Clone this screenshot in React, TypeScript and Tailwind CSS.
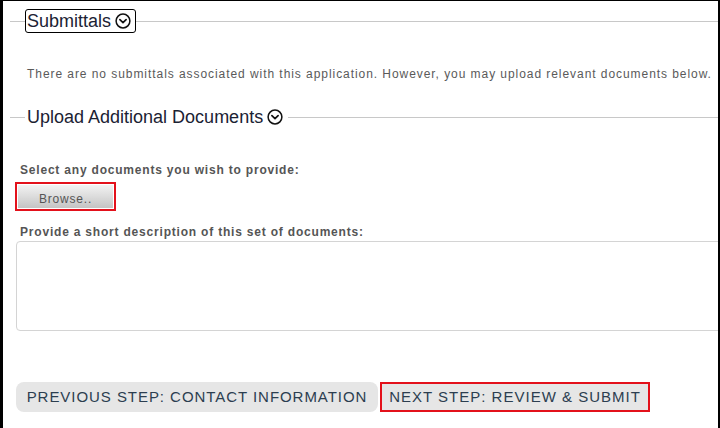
import React from "react";

function CircleChevron({ size = 15 }: { size?: number }) {
  return (
    <svg width={size} height={size} viewBox="0 0 16 16" fill="none">
      <circle cx="8" cy="8" r="6.9" stroke="#111" strokeWidth="1.5" />
      <path d="M4.9 6.6 L8 9.6 L11.1 6.6" stroke="#111" strokeWidth="1.7" strokeLinecap="round" strokeLinejoin="round" />
    </svg>
  );
}

export default function App() {
  return (
    <div
      className="w-[720px] h-[428px] overflow-hidden bg-white border-l-[3px] border-t border-r-2 border-black"
      style={{ fontFamily: '"Liberation Sans", Arial, sans-serif' }}
    >
      {/* Submittals legend */}
      <div className="mt-[8px] flex items-center h-[24px]">
        <div className="ml-[7px] w-[15px] h-px bg-[#c8c8c8]" />
        <div className="flex items-center h-[24px] w-[111px] border-[1.5px] border-black rounded-[3px] pl-[1px] gap-[4px]">
          <span className="text-[18px] leading-none text-[#1b2233]">Submittals</span>
          <CircleChevron size={16} />
        </div>
        <div className="flex-1 h-px bg-[#c8c8c8]" />
      </div>

      <p className="mt-[33px] ml-[24px] text-[12px] leading-[16px] tracking-[0.94px] text-[#5a5a5a] whitespace-nowrap">
        There are no submittals associated with this application. However, you may upload relevant documents below.
      </p>

      {/* Upload legend */}
      <div className="mt-[23px] flex items-center h-[24px]">
        <div className="ml-[7px] w-[15px] h-px bg-[#c8c8c8]" />
        <div className="flex items-center pl-[2px] pr-[5px] gap-[4px]">
          <span className="text-[18px] leading-none text-[#1b2233]">Upload Additional Documents</span>
          <CircleChevron size={16} />
        </div>
        <div className="flex-1 h-px bg-[#c8c8c8]" />
      </div>

      <p className="mt-[33px] ml-[17px] text-[12px] leading-[16px] font-bold tracking-[0.8px] text-[#555]">
        Select any documents you wish to provide:
      </p>

      <div className="mt-[4px] ml-[12px] w-[101px] h-[29px] border-2 border-[#e3111b] p-px">
        <div className="w-full h-full bg-gradient-to-b from-[#f2f2f2] via-[#dcdcdc] to-[#c4c4c4] flex items-center justify-center pt-[5px] text-[12px] tracking-[0.8px] text-[#555]">
          Browse..
        </div>
      </div>

      <p className="mt-[13px] ml-[17px] text-[12px] leading-[16px] font-bold tracking-[0.8px] text-[#555]">
        Provide a short description of this set of documents:
      </p>

      <div className="mt-[1px] ml-[13px] w-[720px] h-[90px] border border-[#d4d4d4] rounded-[4px]" />

      <div className="mt-[51px] ml-[13px] flex items-center gap-[2px]">
        <div className="w-[362px] h-[30px] rounded-[8px] bg-[#e6e6e6] flex items-center justify-center text-[15px] tracking-[0.95px] text-[#2c3e50] whitespace-nowrap">
          PREVIOUS STEP: CONTACT INFORMATION
        </div>
        <div className="w-[270px] h-[30px] border-2 border-[#e3111b] bg-[#e6e6e6] flex items-center justify-center text-[15px] tracking-[1px] text-[#2c3e50] whitespace-nowrap">
          NEXT STEP: REVIEW &amp; SUBMIT
        </div>
      </div>
    </div>
  );
}
